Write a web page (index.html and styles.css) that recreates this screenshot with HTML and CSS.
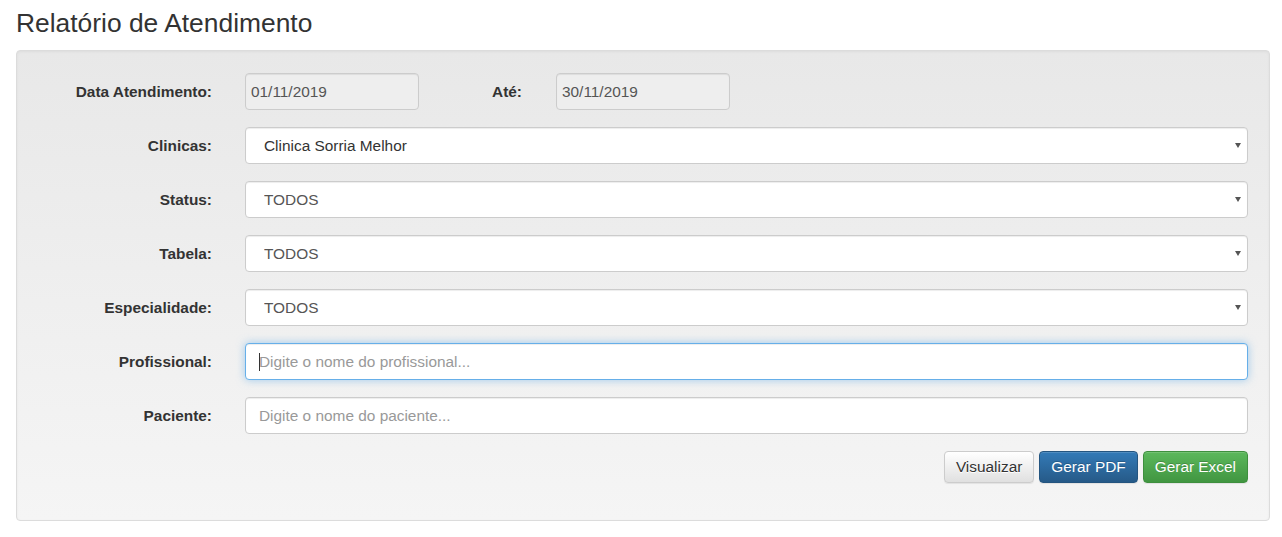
FILE: index.html
```html
<!DOCTYPE html>
<html lang="pt-BR">
<head>
    <meta charset="UTF-8">
    <meta name="viewport" content="width=device-width, initial-scale=1.0">
    <title>Relatório de Atendimento</title>
    <link rel="stylesheet" href="styles.css">
</head>
<body>
    <h3 class="page-title">Relatório de Atendimento</h3>

    <form class="well form-horizontal">
        <div class="form-group">
            <label class="control-label">Data Atendimento:</label>
            <div class="date-row">
                <input type="text" class="form-control date-input" value="01/11/2019" readonly>
                <label class="control-label ate-label">Até:</label>
                <input type="text" class="form-control date-input date-end" value="30/11/2019" readonly>
            </div>
        </div>

        <div class="form-group">
            <label class="control-label">Clinicas:</label>
            <div class="select-wrap">
                <select class="form-control dark">
                    <option>Clinica Sorria Melhor</option>
                </select>
            </div>
        </div>

        <div class="form-group">
            <label class="control-label">Status:</label>
            <div class="select-wrap">
                <select class="form-control">
                    <option>TODOS</option>
                </select>
            </div>
        </div>

        <div class="form-group">
            <label class="control-label">Tabela:</label>
            <div class="select-wrap">
                <select class="form-control">
                    <option>TODOS</option>
                </select>
            </div>
        </div>

        <div class="form-group">
            <label class="control-label">Especialidade:</label>
            <div class="select-wrap">
                <select class="form-control">
                    <option>TODOS</option>
                </select>
            </div>
        </div>

        <div class="form-group">
            <label class="control-label">Profissional:</label>
            <div class="text-wrap">
                <input type="text" class="form-control focused" placeholder="Digite o nome do profissional...">
                <span class="caret-line"></span>
            </div>
        </div>

        <div class="form-group">
            <label class="control-label">Paciente:</label>
            <div class="text-wrap">
                <input type="text" class="form-control" placeholder="Digite o nome do paciente...">
            </div>
        </div>

        <div class="actions">
            <button type="button" class="btn btn-default">Visualizar</button>
            <button type="button" class="btn btn-primary">Gerar PDF</button>
            <button type="button" class="btn btn-success">Gerar Excel</button>
        </div>
    </form>
</body>
</html>
```

FILE: styles.css
```css
body {
    font-family: "Liberation Sans", Arial, sans-serif;
    font-size: 15.4px;
    color: #333;
    margin: 0;
    padding: 0 12px 0 16px;
    background: #fff;
}
.page-title {
    font-size: 26.4px;
    font-weight: 500;
    margin: 0;
    padding: 8px 0 0 0;
    line-height: 30px;
    height: 50px;
    box-sizing: border-box;
}
.well {
    display: block;
    margin: 0;
    padding: 22px 21px 18px 19px;
    background: linear-gradient(to bottom, #e8e8e8 0, #f5f5f5 100%);
    border: 1px solid #dcdcdc;
    border-radius: 4px;
    box-shadow: inset 0 1px 3px rgba(0, 0, 0, .05), 0 1px 0 rgba(255, 255, 255, .1);
}
.form-group {
    display: grid;
    grid-template-columns: 176px 1fr;
    column-gap: 33px;
    align-items: center;
    margin-bottom: 17px;
}
.control-label {
    font-weight: bold;
    text-align: right;
    color: #333;
}
.date-row {
    display: grid;
    grid-template-columns: 174px 103px 174px;
    align-items: center;
}
.ate-label {
    text-align: right;
}
.date-end {
    margin-left: 34px;
}
.form-control {
    display: block;
    width: 100%;
    box-sizing: border-box;
    height: 37px;
    padding: 6px 12px;
    font-family: inherit;
    font-size: 15.4px;
    color: #555;
    background: #fff;
    border: 1px solid #ccc;
    border-radius: 4px;
    box-shadow: inset 0 1px 1px rgba(0, 0, 0, .075);
    outline: none;
}
.form-control::placeholder {
    color: #999;
}
.date-input {
    background: #eee;
    padding-left: 5px;
}
.select-wrap,
.text-wrap {
    position: relative;
}
.select-wrap select {
    -webkit-appearance: none;
    appearance: none;
    padding-left: 18px;
}
.select-wrap select.dark {
    color: #333;
}
.select-wrap::after {
    content: "";
    position: absolute;
    right: 7px;
    top: 16px;
    border-left: 3px solid transparent;
    border-right: 3px solid transparent;
    border-top: 5px solid #555;
    pointer-events: none;
}
.text-wrap .form-control {
    padding-left: 13px;
}
.focused {
    border-color: #66afe9;
    box-shadow: inset 0 1px 1px rgba(0, 0, 0, .075), 0 0 8px rgba(102, 175, 233, .6);
}
.caret-line {
    position: absolute;
    left: 14px;
    top: 10px;
    width: 1px;
    height: 18px;
    background: #333;
}
.actions {
    display: flex;
    justify-content: flex-end;
    gap: 5px;
    margin-bottom: 19px;
}
.btn {
    height: 32px;
    padding: 0 11px;
    font-family: inherit;
    font-size: 15.4px;
    border-radius: 4px;
    border: 1px solid transparent;
    cursor: pointer;
    box-shadow: inset 0 1px 0 rgba(255, 255, 255, .15), 0 1px 1px rgba(0, 0, 0, .075);
}
.btn-default {
    color: #333;
    text-shadow: 0 1px 0 #fff;
    background: linear-gradient(to bottom, #fff 0, #e0e0e0 100%);
    border-color: #ccc;
}
.btn-primary {
    color: #fff;
    text-shadow: 0 -1px 0 rgba(0, 0, 0, .2);
    background: linear-gradient(to bottom, #337ab7 0, #265a88 100%);
    border-color: #245580;
}
.btn-success {
    color: #fff;
    text-shadow: 0 -1px 0 rgba(0, 0, 0, .2);
    background: linear-gradient(to bottom, #5cb85c 0, #419641 100%);
    border-color: #3e8f3e;
}
```
